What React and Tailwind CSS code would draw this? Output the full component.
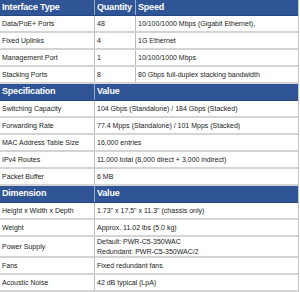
import React from "react";

const interfaces = [
  ["Data/PoE+ Ports", "48", "10/100/1000 Mbps (Gigabit Ethernet),"],
  ["Fixed Uplinks", "4", "1G Ethernet"],
  ["Management Port", "1", "10/100/1000 Mbps"],
  ["Stacking Ports", "8", "80 Gbps full-duplex stacking bandwidth"],
];

const specs = [
  ["Switching Capacity", "104 Gbps (Standalone) / 184 Gbps (Stacked)"],
  ["Forwarding Rate", "77.4 Mpps (Standalone) / 101 Mpps (Stacked)"],
  ["MAC Address Table Size", "16,000 entries"],
  ["IPv4 Routes", "11,000 total (8,000 direct + 3,000 indirect)"],
  ["Packet Buffer", "6 MB"],
];

const dims = [
  ["Height x Width x Depth", ["1.73\" x 17.5\" x 11.3\" (chassis only)"]],
  ["Weight", ["Approx. 11.02 lbs (5.0 kg)"]],
  ["Power Supply", ["Default: PWR-C5-350WAC", "Redundant: PWR-C5-350WAC/2"]],
  ["Fans", ["Fixed redundant fans"]],
  ["Acoustic Noise", ["42 dB typical (LpA)"]],
];

const Head = ({ cells, cols, h }) => (
  <div className={`grid ${cols} ${h} bg-[#2f5597] text-white text-[9px] font-bold tracking-[-0.2px] border-b border-[#24467f]`}>
    {cells.map((c, i) => (
      <div key={i} className={`flex items-center pl-[2px] ${i > 0 ? "border-l border-[#9aa9c6]" : ""}`}>
        {c}
      </div>
    ))}
  </div>
);

const Row = ({ cells, cols, h = "h-[17px]" }) => (
  <div className={`grid ${cols} ${h} bg-white text-[7px] text-[#222] border-b-2 border-[#d4d4d4]`}>
    {cells.map((c, i) => (
      <div key={i} className={`flex flex-col justify-center pl-[2px] leading-[10px] ${i > 0 ? "border-l border-[#bdbdbd]" : ""}`}>
        {Array.isArray(c) ? c.map((l, j) => <span key={j}>{l}</span>) : c}
      </div>
    ))}
  </div>
);

export default function App() {
  const three = "grid-cols-[94px_41px_1fr]";
  const two = "grid-cols-[94px_1fr]";
  return (
    <div className="w-[300px] h-[292px] bg-white overflow-hidden" style={{ fontFamily: '"Liberation Sans", Arial, sans-serif' }}>
      <div className="w-[299px] border-r border-[#c4c4c4]">
        <Head cells={["Interface Type", "Quantity", "Speed"]} cols={three} h="h-[16px]" />
        {interfaces.map((r) => (
          <Row key={r[0]} cells={r} cols={three} />
        ))}
        <Head cells={["Specification", "Value"]} cols={two} h="h-[17px]" />
        {specs.map((r) => (
          <Row key={r[0]} cells={r} cols={two} />
        ))}
        <Head cells={["Dimension", "Value"]} cols={two} h="h-[17px]" />
        {dims.map((r) => (
          <Row key={r[0]} cells={r} cols={two} h={r[0] === "Power Supply" ? "h-[21px]" : "h-[17px]"} />
        ))}
      </div>
    </div>
  );
}
